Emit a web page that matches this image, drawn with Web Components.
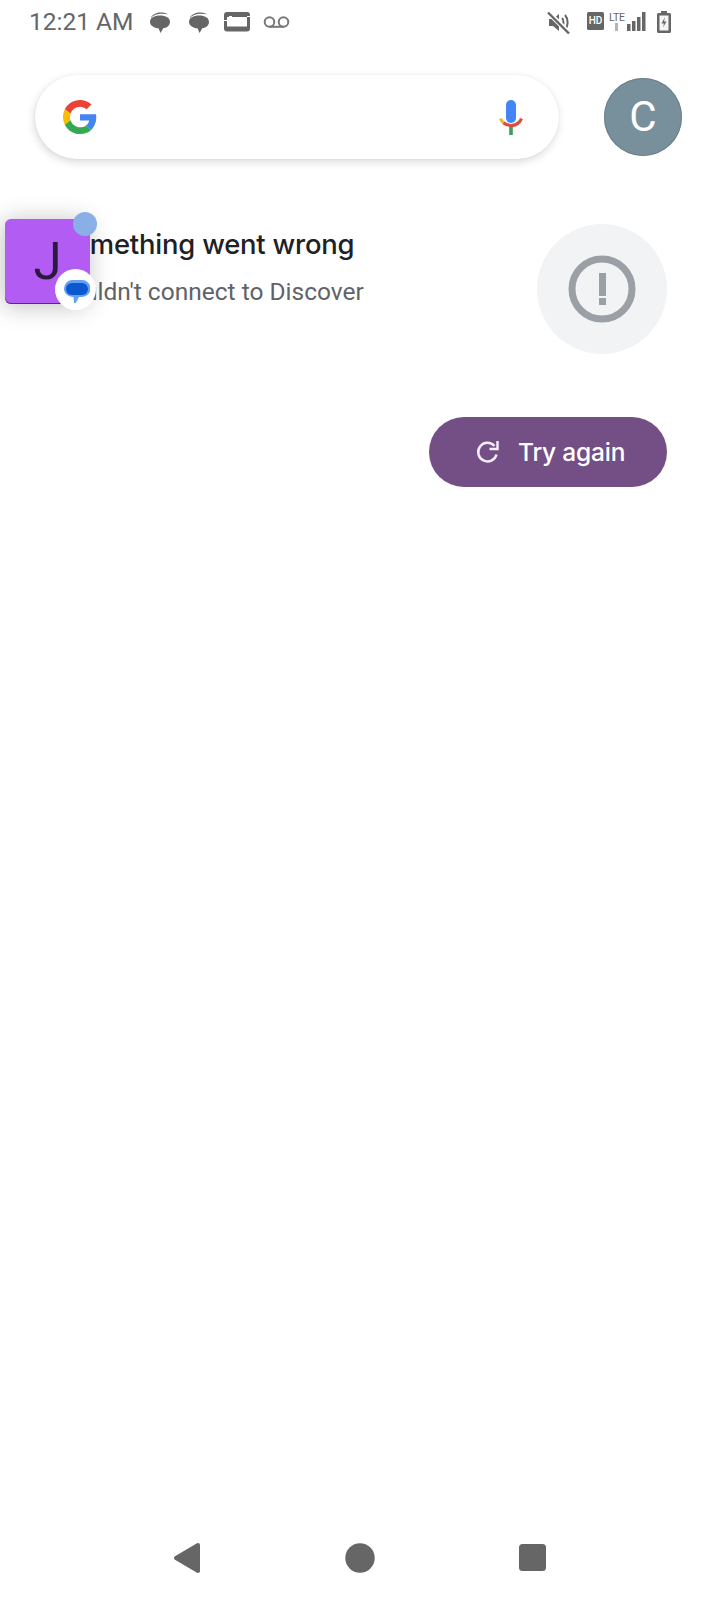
<!DOCTYPE html>
<html><head><meta charset="utf-8"><title>Discover</title>
<style>
html,body{margin:0;padding:0;background:#fff;width:720px;height:1600px;overflow:hidden;font-family:Roboto,"Liberation Sans",sans-serif}
app-shell{width:720px;height:1600px}
</style></head><body>
<app-shell>
  <status-bar slot="top"></status-bar>
  <search-row slot="top"></search-row>
  <error-card slot="top"></error-card>
  <nav-bar slot="bottom"></nav-bar>
  <chat-head slot="over"></chat-head>
</app-shell>
<script>
function el(name, html){
  customElements.define(name, class extends HTMLElement{
    constructor(){super();this.attachShadow({mode:'open'}).innerHTML=html;}
  });
}
const BUB=`<path d="M1.500 6.500C3 2.500 8 .6 12 .6c2.500 0 5 .5 7 1.700-2-.4-4-.6-6-.6-4 0-9 1.400-11.500 4.800z" fill="#666"/><path d="M11 3.500c5.800 0 10 2.400 10 6.400 0 3.400-3 5.700-6.500 6.200L11.500 21 9.500 16.300C5 15.900 1 13.400 1 9.900 1 5.900 5.200 3.500 11 3.500z" fill="#666"/>`;
el('app-shell',`<style>
:host{display:flex;flex-direction:column;position:relative;background:#fff}
main{flex:1;display:flex;flex-direction:column}
</style><main><slot name="top"></slot></main><slot name="bottom"></slot><slot name="over"></slot>`);

el('status-bar',`<style>
:host{display:flex;align-items:center;height:44px;padding:0 49px 0 29px;color:#666;font:400 24.500px/44px Roboto,sans-serif;box-sizing:border-box}
svg{display:block;flex:none}
.time{width:120px;white-space:nowrap}
.sp{flex:1}
.hd{flex:none;width:17px;height:18px;background:#666;color:#fff;font:500 10px/18px Roboto,sans-serif;text-align:center;border-radius:1.500px;margin-left:17px;position:relative;top:-1px}
.lte{flex:none;width:17px;height:22px;position:relative;margin-left:5px;font:400 10.500px/10px Roboto,sans-serif;color:#666;letter-spacing:-.2px}
.lte span{display:block;margin-top:2px}
.lte i{position:absolute;left:6px;top:12px;width:3px;height:8px;background:#b4b4b4}
</style>
<span class="time">12:21 AM</span>
<svg width="22" height="21" viewBox="0 0 22 21">${BUB}</svg>
<svg style="margin-left:17px" width="22" height="21" viewBox="0 0 22 21">${BUB}</svg>
<svg style="margin-left:14px" width="26" height="20" viewBox="0 0 26 20"><rect width="26" height="19.500" rx="3" fill="#666"/><path d="M3 5h20v9.500H3z" fill="#fff"/><path d="M0 8h3v1H0zM23 4h3v1h-3zM5 4h3v1H5z" fill="#fff"/></svg>
<svg style="margin-left:13px" width="27" height="12" viewBox="0 0 27 12"><g fill="none" stroke="#777" stroke-width="2"><circle cx="6.500" cy="6" r="4.800"/><circle cx="20.500" cy="6" r="4.800"/><path d="M6.500 10.800h14"/></g></svg>
<span class="sp"></span>
<svg width="23" height="23" viewBox="0 0 23 23"><path d="M2 8h4l6-5v17l-6-5H2z" fill="#666"/><path d="M15 7c2 2 2 7 0 9M18 4c3.500 4 3.500 11 0 15" fill="none" stroke="#666" stroke-width="2"/><path d="M1 1l21 21" stroke="#fff" stroke-width="5"/><path d="M1 1.500l21 21" stroke="#666" stroke-width="2.400"/></svg>
<span class="hd">HD</span>
<span class="lte"><span>LTE</span><i></i></span>
<svg style="margin-left:1px;position:relative;top:-1px" width="19" height="19" viewBox="0 0 19 19"><path d="M0 12h3.500v7H0zM5 9h3.500v10H5zM10 5h3.500v14H10zM15 0h3.500v19H15z" fill="#666"/></svg>
<svg style="margin-left:11px" width="14" height="22" viewBox="0 0 14 22"><path d="M4 0h6v2h2.500A1.500 1.500 0 0 1 14 3.500v17a1.500 1.500 0 0 1-1.500 1.500h-11A1.500 1.500 0 0 1 0 20.500v-17A1.500 1.500 0 0 1 1.500 2H4z" fill="#666"/><path d="M2.500 4.500h9v15h-9z" fill="#f4f4f4"/><path d="M8 6L4.500 12.500H7l-1 4L9.500 10.500H7z" fill="#666"/></svg>`);

el('search-row',`<style>
:host{display:flex;align-items:center;height:84px;margin-top:31px;padding-left:35px;box-sizing:border-box}
.bar{width:524px;height:84px;border-radius:42px;background:#fff;box-shadow:-1px 3px 9px rgba(0,0,0,.15),0 0 2px rgba(0,0,0,.07);display:flex;align-items:center;justify-content:space-between;padding:0 36px 0 28px;box-sizing:border-box}
.av{margin-left:45px;width:78px;height:78px;border-radius:50%;background:#78909c;box-shadow:inset 0 0 0 1px #6c828d;color:#fff;font:400 42px/78px Roboto,sans-serif;text-align:center}
svg{display:block}
</style>
<div class="bar">
<svg width="34" height="34" viewBox="0 0 48 48"><path fill="#EA4335" d="M24 9.500c3.500 0 6.700 1.300 9.200 3.600l6.900-6.900C35.900 2.400 30.300 0 24 0 14.600 0 6.500 5.400 2.600 13.200l8 6.200C12.500 13.700 17.800 9.500 24 9.500z"/><path fill="#4285F4" d="M47 24.500c0-1.600-.1-3.100-.4-4.500H24v9h13c-.6 3-2.300 5.500-4.800 7.200l7.700 6C44.400 38 47 31.800 47 24.500z"/><path fill="#FBBC05" d="M10.500 28.600C10 27.200 9.800 25.600 9.800 24s.3-3.200.8-4.600l-8-6.200C.9 16.500 0 20.100 0 24s.9 7.500 2.600 10.800z"/><path fill="#34A853" d="M24 48c6.500 0 11.900-2.100 15.900-5.800l-7.700-6c-2.200 1.400-4.900 2.300-8.200 2.300-6.200 0-11.500-4.200-13.400-9.900l-8 6.200C6.500 42.600 14.600 48 24 48z"/></svg>
<svg width="24" height="35" viewBox="0 0 24 35"><rect x="7" y="0" width="10" height="23" rx="5" fill="#4285F4"/><path d="M1.500 18.500c.6 1.600 1.600 3 3 4.200" fill="none" stroke="#F2B632" stroke-width="3.200"/><path d="M4.500 22.700C6.500 24.500 9 25.500 12 25.500s5.500-1 7.500-2.800c1.400-1.200 2.400-2.600 3-4.200" fill="none" stroke="#D9503F" stroke-width="3.200"/><rect x="10.200" y="27" width="3.600" height="8" fill="#3C9F5C"/></svg>
</div>
<div class="av">C</div>`);

el('error-card',`<style>
:host{display:block;height:328px;box-sizing:border-box;position:relative}
.row{display:flex;justify-content:space-between;align-items:flex-start;padding:65px 53px 0 56px}
.t{font:500 27.400px/36px Inter,sans-serif;color:#202124;margin-top:2px;white-space:nowrap;letter-spacing:-.2px}
.s{font:400 24.500px/32px Roboto,sans-serif;color:#5f6368;margin:14px 0 0 -2px;white-space:nowrap}
.ic{width:130px;height:130px;border-radius:50%;background:#f1f3f4;display:flex;align-items:center;justify-content:center}
.foot{display:flex;justify-content:flex-end;padding:63px 53px 0 0}
</style>
<div class="row"><div><div class="t">Something went wrong</div><div class="s">Couldn't connect to Discover</div></div>
<div class="ic"><svg width="68" height="68" viewBox="0 0 68 68"><circle cx="34" cy="34" r="30" fill="none" stroke="#9aa0a6" stroke-width="7"/><path d="M31 18h7v23h-7zM31 43h7v7h-7z" fill="#9aa0a6"/></svg></div></div>
<div class="foot"><retry-button>Try again</retry-button></div>`);

el('retry-button',`<style>
:host{display:flex;align-items:center;width:238px;height:70px;border-radius:35px;background:#734f85;color:#fff;font:500 24.500px/70px Inter,sans-serif;letter-spacing:-.2px;box-sizing:border-box;padding-left:47px;gap:18px}
svg{display:block;flex:none}
</style><svg width="24" height="24" viewBox="0 0 24 24"><path d="M20.500 14.500A9.300 9.300 0 1 1 18.500 6" fill="none" stroke="#f6ecf9" stroke-width="2.500"/><path d="M21.500 1v8H13.500" fill="none" stroke="#f6ecf9" stroke-width="2.500"/></svg><slot></slot>`);

el('nav-bar',`<style>
:host{display:flex;align-items:center;height:83px;box-sizing:border-box;padding:0 0 2px 173px}
svg{display:block;flex:none}
</style>
<svg width="28" height="32" viewBox="0 0 28 32"><path d="M25 3L3 16l22 13z" fill="#666" stroke="#666" stroke-width="4" stroke-linejoin="round"/></svg>
<svg style="margin-left:144px" width="30" height="30" viewBox="0 0 30 30"><circle cx="15" cy="15" r="14.700" fill="#666"/></svg>
<svg style="margin-left:144px" width="27" height="27" viewBox="0 0 27 27"><rect width="27" height="27" rx="3.500" fill="#666"/></svg>`);

el('chat-head',`<style>
:host{display:block;position:absolute;left:5px;top:219px;width:85px;height:85px}
.sq{width:85px;height:85px;border-radius:6px;background:#b35cf4;box-shadow:-2px 2px 24px rgba(0,0,0,.26),inset 0 -1px 0 #5a2a80;color:#2c1a3c;font:400 51px/85px Roboto,sans-serif;text-align:center}
.dot{position:absolute;left:68px;top:-7px;width:24px;height:24px;border-radius:50%;background:#8aaee6}
.bd{position:absolute;left:50px;top:50px;width:41px;height:41px;border-radius:50%;background:#fff}
svg{display:block;position:absolute;left:9px;top:11px}
</style>
<div class="sq">J</div><div class="dot"></div>
<div class="bd"><svg width="26" height="24" viewBox="0 0 26 24"><path d="M8 0h10a8.500 8.500 0 0 1 0 17h-3l-3 5.500c-.8 1-1.800 1-2 0L9.500 17C4 17 0 13 0 8.500A8.500 8.500 0 0 1 8 0z" fill="#62a0f2"/><rect x="2" y="3" width="22" height="12" rx="6" fill="#0b57d0"/></svg></div>`);
</script>
</body></html>
